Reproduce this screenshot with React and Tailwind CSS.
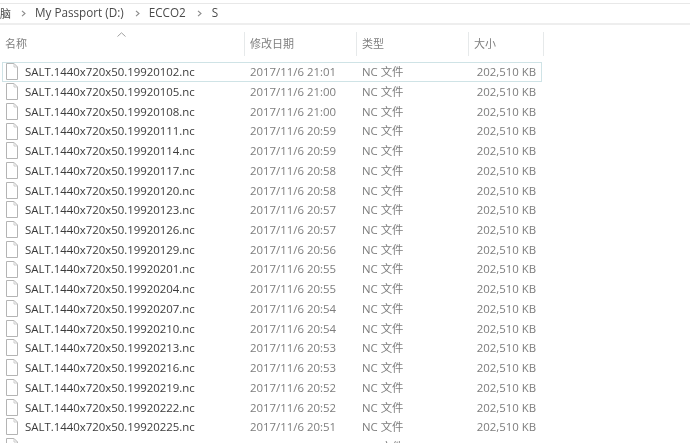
const rows = [
  ["19920102", "21:01"],
  ["19920105", "21:00"],
  ["19920108", "21:00"],
  ["19920111", "20:59"],
  ["19920114", "20:59"],
  ["19920117", "20:58"],
  ["19920120", "20:58"],
  ["19920123", "20:57"],
  ["19920126", "20:57"],
  ["19920129", "20:56"],
  ["19920201", "20:55"],
  ["19920204", "20:55"],
  ["19920207", "20:54"],
  ["19920210", "20:54"],
  ["19920213", "20:53"],
  ["19920216", "20:53"],
  ["19920219", "20:52"],
  ["19920222", "20:52"],
  ["19920225", "20:51"],
  ["19920228", "20:51"],
];

function FileIcon() {
  return (
    <svg width="12" height="17" viewBox="0 0 12 17" fill="none" className="shrink-0">
      <path d="M0.5 0.5H8L11.5 4V16.5H0.5Z" fill="#fff" stroke="#b4b4b4" />
      <path d="M8 0.5V4H11.5" stroke="#cccccc" />
    </svg>
  );
}

function Chevron() {
  return (
    <svg width="5" height="7" viewBox="0 0 5 7" fill="none">
      <path d="M1 0.8L4 3.5L1 6.2" stroke="#8a8a8a" strokeWidth="1.1" />
    </svg>
  );
}

function HeaderCell({ children, width }) {
  return (
    <div className={`${width} h-full flex items-center pl-[5px] border-r border-[#e6e9ea] text-[11px] text-[#7f7f7f]`}>
      {children}
    </div>
  );
}

export default function App() {
  return (
    <div className="w-[690px] h-[443px] overflow-hidden bg-white font-['Open_Sans','Noto_Sans_CJK_SC',sans-serif] blur-[0.4px]">
      <div className="h-[22px] mt-[3px] pb-px flex items-center border-t border-b-2 border-t-[#e8e8e8] border-b-[#eeeeee] text-[11.7px] text-[#4a4a4a]">
        <span className="w-[11px] overflow-hidden shrink-0 flex justify-end text-[11px] font-['Noto_Sans_CJK_SC',sans-serif]">脑</span>
        <span className="ml-[10px]"><Chevron /></span>
        <span className="ml-[9px]">My Passport (D:)</span>
        <span className="ml-[11px]"><Chevron /></span>
        <span className="ml-[9px]">ECCO2</span>
        <span className="ml-[11px]"><Chevron /></span>
        <span className="ml-[10px]">S</span>
      </div>

      <div className="relative flex h-[24px] mt-[7px] w-[544px]">
        <svg width="9" height="5" viewBox="0 0 9 5" fill="none" className="absolute left-[117px] top-0">
          <path d="M0.5 4.5L4.5 0.8L8.5 4.5" stroke="#a0a0a0" />
        </svg>
        <HeaderCell width="w-[245px]">名称</HeaderCell>
        <HeaderCell width="w-[112px]">修改日期</HeaderCell>
        <HeaderCell width="w-[112px]">类型</HeaderCell>
        <HeaderCell width="w-[75px]">大小</HeaderCell>
      </div>

      <div className="mt-[6px] ml-[2px] w-[540px]">
        {rows.map(([date, time], i) => (
          <div
            key={date}
            className={`h-[19.72px] grid grid-cols-[243px_112px_112px_71px] items-center text-[11.4px] border ${i === 0 ? "border-[#cfe3e6]" : "border-transparent"}`}
          >
            <div className="flex items-center gap-[7px] pl-[3px] text-[#3c3c3c] whitespace-nowrap">
              <FileIcon />
              <span>SALT.1440x720x50.{date}.nc</span>
            </div>
            <div className="pl-[4px] text-[#7d7d7d] whitespace-nowrap">2017/11/6 {time}</div>
            <div className="pl-[4px] text-[#7d7d7d] whitespace-nowrap">NC 文件</div>
            <div className="text-right pr-[5px] text-[#7d7d7d] whitespace-nowrap">202,510 KB</div>
          </div>
        ))}
      </div>
    </div>
  );
}
